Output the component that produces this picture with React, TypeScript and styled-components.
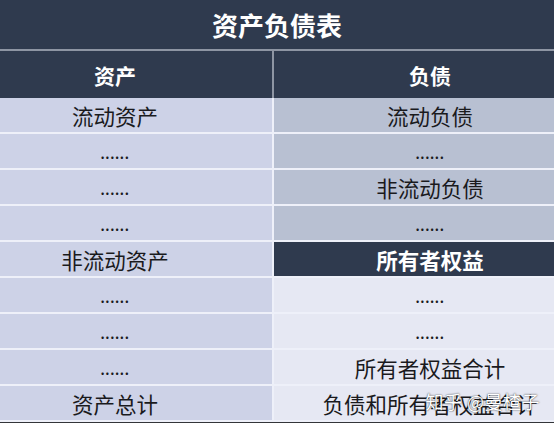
import React from 'react';
import styled, { createGlobalStyle } from 'styled-components';

const GlobalStyle = createGlobalStyle`
  html, body {
    margin: 0;
    padding: 0;
    background: #ffffff;
  }
  body {
    font-family: 'Noto Sans CJK SC', 'Noto Sans', sans-serif;
  }
`;

const Sheet = styled.div`
  position: relative;
  width: 554px;
  height: 423px;
  overflow: hidden;
  background: #333539;
`;

const TitleBar = styled.div`
  height: 49px;
  display: flex;
  align-items: center;
  justify-content: center;
  background: #2f3a4e;
  color: #ffffff;
  font-size: 26px;
  font-weight: 700;
  border-bottom: 2px solid #8e95a3;
`;

const HeaderRow = styled.div`
  display: grid;
  grid-template-columns: 272px 1fr;
  column-gap: 2px;
  background: #8e95a3;
`;

const HeaderCell = styled.div<{ $side: 'left' | 'right' }>`
  height: 47px;
  display: flex;
  align-items: center;
  justify-content: center;
  background: #2f3a4e;
  color: #ffffff;
  font-size: 21px;
  font-weight: 700;
  padding: ${(p) => (p.$side === 'left' ? '0 42px 0 0' : '0 0 0 32px')};
`;

const Body = styled.div`
  display: grid;
  grid-template-columns: 272px 1fr;
  grid-auto-rows: 34px;
  gap: 2px;
  background: #eef0f9;
  padding-bottom: 2px;
`;

type Tone = 'lavender' | 'steel' | 'pale' | 'dark';

const tones: Record<Tone, { bg: string; fg: string; weight: number }> = {
  lavender: { bg: '#cdd2e7', fg: '#1a1a1d', weight: 400 },
  steel: { bg: '#b8c0d2', fg: '#1a1a1d', weight: 400 },
  pale: { bg: '#e6e8f3', fg: '#1a1a1d', weight: 400 },
  dark: { bg: '#2f3a4e', fg: '#ffffff', weight: 700 },
};

const Cell = styled.div<{ $tone: Tone; $side: 'left' | 'right' }>`
  display: flex;
  align-items: center;
  justify-content: center;
  background: ${(p) => tones[p.$tone].bg};
  color: ${(p) => tones[p.$tone].fg};
  font-weight: ${(p) => tones[p.$tone].weight};
  font-size: 21.5px;
  white-space: nowrap;
  padding: ${(p) => (p.$side === 'left' ? '0 42px 0 0' : '0 0 0 32px')};
`;

const Dots = styled.span`
  font-size: 13px;
  font-weight: 700;
  letter-spacing: 0.6px;
  margin-top: 4px;
`;

// zhihu watermark sits over the last cell
const Watermark = styled.div`
  position: absolute;
  right: 14px;
  bottom: 9px;
  color: #ffffff;
  font-size: 18px;
  letter-spacing: 0.5px;
  text-shadow: 0 0 2px rgba(0, 0, 0, 0.55), 0 0 1px rgba(0, 0, 0, 0.5);
  pointer-events: none;
`;

const rows: [string, [string, Tone]][] = [
  ['流动资产', ['流动负债', 'steel']],
  ['......', ['......', 'steel']],
  ['......', ['非流动负债', 'steel']],
  ['......', ['......', 'steel']],
  ['非流动资产', ['所有者权益', 'dark']],
  ['......', ['......', 'pale']],
  ['......', ['......', 'pale']],
  ['......', ['所有者权益合计', 'pale']],
  ['资产总计', ['负债和所有者权益合计', 'pale']],
];

const renderText = (text: string) =>
  text === '......' ? <Dots>{text}</Dots> : text;

export default function App() {
  return (
    <>
      <GlobalStyle />
      <Sheet>
        <TitleBar>资产负债表</TitleBar>
        <HeaderRow>
          <HeaderCell $side="left">资产</HeaderCell>
          <HeaderCell $side="right">负债</HeaderCell>
        </HeaderRow>
        <Body>
          {rows.map(([left, [right, tone]], i) => (
            <React.Fragment key={i}>
              <Cell $tone="lavender" $side="left">
                {renderText(left)}
              </Cell>
              <Cell $tone={tone} $side="right">
                {renderText(right)}
              </Cell>
            </React.Fragment>
          ))}
        </Body>
        <Watermark>知乎 @曼楂子</Watermark>
      </Sheet>
    </>
  );
}
